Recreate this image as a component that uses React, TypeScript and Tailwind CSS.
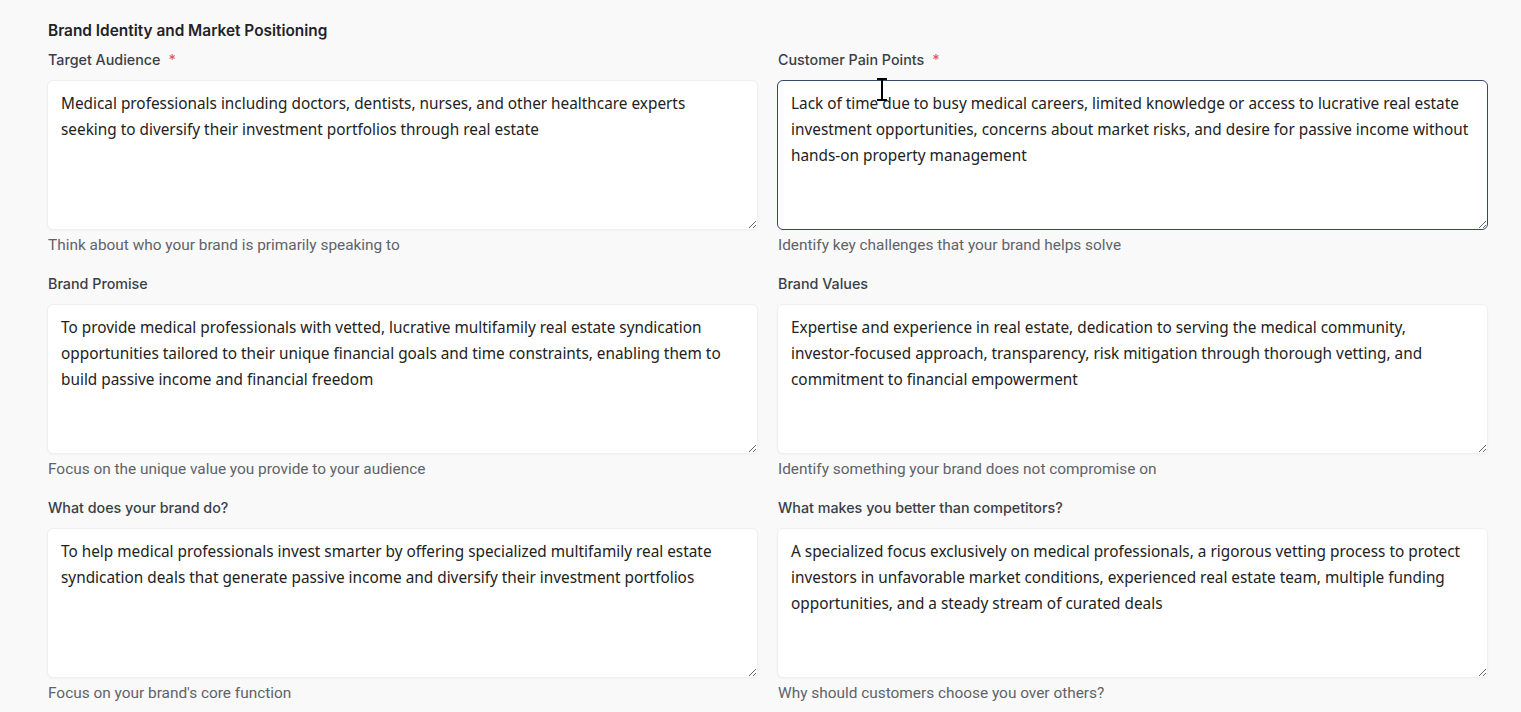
import React from "react";

type Field = {
  label: string;
  required?: boolean;
  value: string;
  hint: string;
  focused?: boolean;
};

const fields: Field[] = [
  {
    label: "Target Audience",
    required: true,
    value:
      "Medical professionals including doctors, dentists, nurses, and other healthcare experts seeking to diversify their investment portfolios through real estate",
    hint: "Think about who your brand is primarily speaking to",
  },
  {
    label: "Customer Pain Points",
    required: true,
    focused: true,
    value:
      "Lack of time due to busy medical careers, limited knowledge or access to lucrative real estate investment opportunities, concerns about market risks, and desire for passive income without hands-on property management",
    hint: "Identify key challenges that your brand helps solve",
  },
  {
    label: "Brand Promise",
    value:
      "To provide medical professionals with vetted, lucrative multifamily real estate syndication opportunities tailored to their unique financial goals and time constraints, enabling them to build passive income and financial freedom",
    hint: "Focus on the unique value you provide to your audience",
  },
  {
    label: "Brand Values",
    value:
      "Expertise and experience in real estate, dedication to serving the medical community, investor-focused approach, transparency, risk mitigation through thorough vetting, and commitment to financial empowerment",
    hint: "Identify something your brand does not compromise on",
  },
  {
    label: "What does your brand do?",
    value:
      "To help medical professionals invest smarter by offering specialized multifamily real estate syndication deals that generate passive income and diversify their investment portfolios",
    hint: "Focus on your brand's core function",
  },
  {
    label: "What makes you better than competitors?",
    value:
      "A specialized focus exclusively on medical professionals, a rigorous vetting process to protect investors in unfavorable market conditions, experienced real estate team, multiple funding opportunities, and a steady stream of curated deals",
    hint: "Why should customers choose you over others?",
  },
];

function FieldBlock({ field }: { field: Field }) {
  return (
    <div className="flex flex-col">
      <label className="pl-px font-['Inter',sans-serif] text-[14.3px] leading-5 font-medium text-[#3a3f47] mb-[10px]">
        {field.label}
        {field.required && <span className="ml-2 text-[#e05a5a]">*</span>}
      </label>
      <div className="relative">
        <textarea
          defaultValue={field.value}
          className={
            "block w-full h-[150px] bg-white rounded-md pl-[13px] pr-[16px] pt-[9px] font-['Noto_Sans',sans-serif] text-[15.35px] leading-[26px] text-[#222] outline-none " +
            (field.focused
              ? "border border-[#34486a] rounded-[7px]"
              : "border border-[#eeeff1] shadow-[0_1px_2px_rgba(0,0,0,0.03)]")
          }
        />
        {field.focused && (
          <svg
            className="absolute left-[99px] top-[-2px]"
            width="12"
            height="24"
            viewBox="0 0 12 24"
          >
            <path d="M1 1h10M6 1v21M1 22h10" stroke="#000" strokeWidth="2" fill="none" />
          </svg>
        )}
      </div>
      <p className="mt-[5px] pl-px font-['Roboto',sans-serif] text-[15.4px] leading-5 text-[#5f6368]">
        {field.hint}
      </p>
    </div>
  );
}

export default function App() {
  return (
    <div className="min-h-screen bg-[#f9f9fa] pl-[47px] pr-[33px] pt-[21px] pb-6">
      <h2 className="font-['Inter',sans-serif] text-[15.4px] leading-5 font-semibold text-[#1f2328] ml-px mb-[9px]">
        Brand Identity and Market Positioning
      </h2>
      <div className="grid grid-cols-2 gap-x-[19px] gap-y-[19px]">
        {fields.map((f) => (
          <FieldBlock key={f.label} field={f} />
        ))}
      </div>
    </div>
  );
}
